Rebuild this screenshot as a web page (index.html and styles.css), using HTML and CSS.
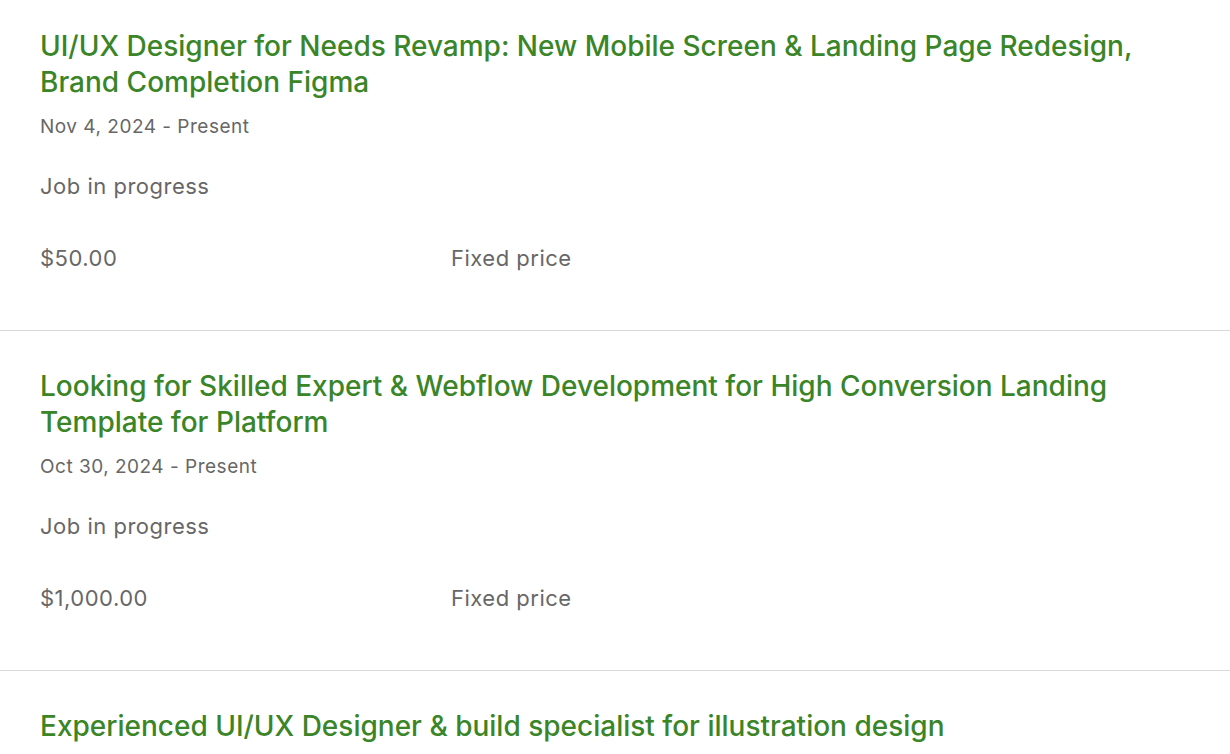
FILE: index.html
```html
<!DOCTYPE html>
<html>
<head>
<meta charset="utf-8">
<link rel="stylesheet" href="styles.css">
</head>
<body>
<div class="list">
  <section class="job">
    <h2 class="title">UI/UX Designer for Needs Revamp: New Mobile Screen &amp; Landing Page Redesign, Brand Completion Figma</h2>
    <div class="date">Nov 4, 2024 - Present</div>
    <div class="status">Job in progress</div>
    <div class="terms">
      <span class="amount">$50.00</span>
      <span class="type">Fixed price</span>
    </div>
  </section>
  <section class="job">
    <h2 class="title">Looking for Skilled Expert &amp; Webflow Development for High Conversion Landing Template for Platform</h2>
    <div class="date">Oct 30, 2024 - Present</div>
    <div class="status">Job in progress</div>
    <div class="terms">
      <span class="amount">$1,000.00</span>
      <span class="type">Fixed price</span>
    </div>
  </section>
  <section class="job">
    <h2 class="title">Experienced UI/UX Designer &amp; build specialist for illustration design</h2>
    <div class="date">Oct 28, 2024 - Present</div>
    <div class="status">Job in progress</div>
  </section>
</div>
</body>
</html>
```
FILE: styles.css
```css
html, body {
  margin: 0;
  padding: 0;
  background: #ffffff;
}
body {
  font-family: Inter, "Liberation Sans", Arial, sans-serif;
  color: #676767;
}
.list {
  display: flex;
  flex-direction: column;
}
.job {
  display: flex;
  flex-direction: column;
  padding: 37px 40px 0 40px;
  height: 340px;
  box-sizing: border-box;
  border-bottom: 1px solid #d9d9d9;
}
.job:first-child {
  padding-top: 28px;
  height: 331px;
}
.title {
  margin: 0;
  font-size: 28px;
  line-height: 36px;
  font-weight: 500;
  color: #3a8527;
  max-width: 1130px;
}
.date {
  margin-top: 15px;
  font-size: 19px;
  line-height: 24px;
  letter-spacing: 0.5px;
}
.status {
  margin-top: 34px;
  font-size: 22px;
  line-height: 26px;
  letter-spacing: 0.5px;
}
.terms {
  margin-top: 46px;
  display: grid;
  grid-template-columns: 411px auto;
  font-size: 22px;
  line-height: 26px;
  letter-spacing: 0.5px;
}
```
